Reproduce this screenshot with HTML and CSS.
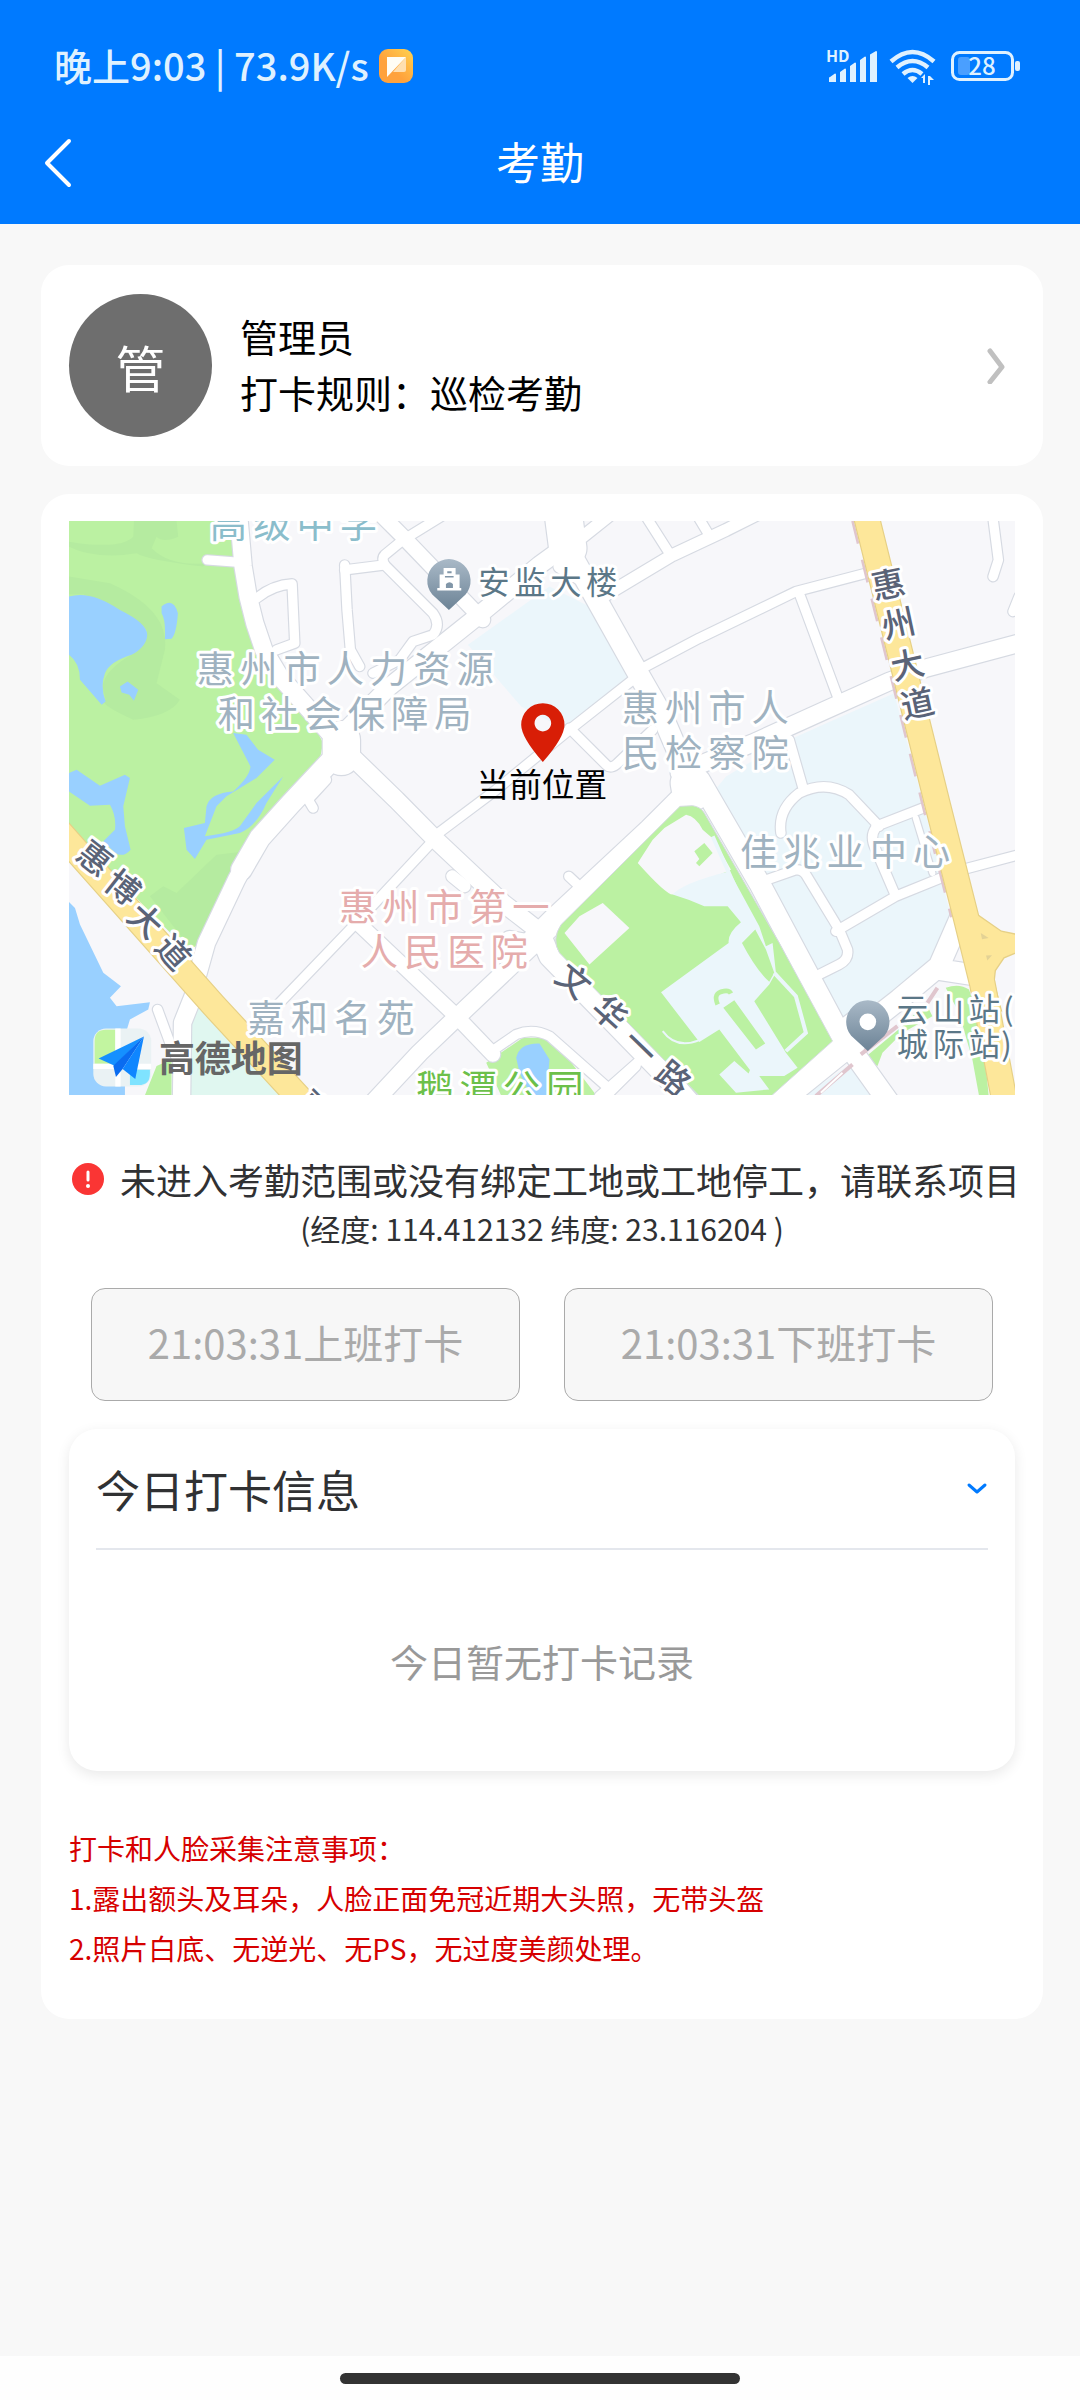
FILE: index.html
```html
<!DOCTYPE html>
<html lang="zh-CN">
<head>
<meta charset="utf-8">
<meta name="viewport" content="width=device-width, initial-scale=1">
<title>考勤</title>
<link rel="stylesheet" href="styles.css">
</head>
<body>
<header class="top">
  <div class="status">
    <span class="status-text">晚上9:03 | 73.9K/s</span>
    <svg class="app-icon" width="34" height="34" viewBox="0 0 34 34" aria-hidden="true">
      <defs><linearGradient id="appBg" x1="0" y1="1" x2="1" y2="0"><stop offset=".4" stop-color="#ffa23c"/><stop offset="1" stop-color="#ffd350"/></linearGradient></defs>
      <rect width="34" height="34" rx="9" fill="url(#appBg)"/>
      <path d="M27 8v13q0 2-2 2H14z" fill="#ffdfb0"/>
      <path d="M8 8h19L8 28z" fill="#fffdf5"/>
    </svg>
    <svg class="signals" width="200" height="48" viewBox="820 42 200 48" role="img" aria-label="信号 无线网络 电量">
      <g fill="#dff1ff">
        <text class="hd" x="826" y="62">HD</text>
        <path d="M829 82v-4q0-1 1-1l5-3.500q1 0 1 1V82zM840 82V72l5-3.500q1 0 1 1V82zM850 82V66l5-3.500q1 0 1 1V82zM860 82V60l5-3.500q1 0 1 1V82zM870 82V54.500l6-3.500q1 0 1 1V82z"/>
        <path d="M912.500 83l-5-5q5-4 10 0z"/>
        <rect x="1015" y="61" width="5" height="10" rx="2"/>
        <path d="M925 83v-9l-4 4h2v5zM928 76v9h2v-5h4l-4-4z"/>
      </g>
      <g fill="none" stroke="#dff1ff" stroke-width="4.500">
        <path d="M891 61.500q21.500-19 43 0M897 67.500q15.500-13 31 0M903 74q9.500-8 19 0"/>
        <rect x="952.500" y="52.500" width="60" height="27" rx="7" stroke-width="3"/>
      </g>
      <rect x="958" y="57" width="12" height="18" rx="3" fill="#4a9fff"/>
      <text class="level" x="982" y="75" text-anchor="middle">28</text>
    </svg>
  </div>
  <nav class="bar">
    <button class="back" type="button" aria-label="返回">
      <svg width="30" height="50" viewBox="0 0 30 50"><path d="M27 3L5 25l22 22" fill="none" stroke="#fff" stroke-width="4" stroke-linecap="round" stroke-linejoin="round"/></svg>
    </button>
    <h1 class="title">考勤</h1>
  </nav>
</header>

<main class="content">
  <a class="card profile" href="#rules">
    <span class="avatar">管</span>
    <span class="profile-text"><span>管理员</span><span>打卡规则：巡检考勤</span></span>
    <svg width="20" height="36" viewBox="0 0 20 36" aria-hidden="true"><path d="M4 3l12 16L4 34" fill="none" stroke="#c0c0c0" stroke-width="5" stroke-linecap="round" stroke-linejoin="round"/></svg>
  </a>

  <section class="card punch">
    <svg class="map" viewBox="0 0 2841 1725" role="img" aria-label="地图">
      <defs>
        <linearGradient id="poi" x1="0" y1="0" x2="0" y2="1"><stop offset="0" stop-color="#a9b9c7"/><stop offset="1" stop-color="#6c8396"/></linearGradient>
        <g id="streets">
          <g transform="translate(-27 -33)">
            <path class="road w50" d="M535 0L550 170L565 260L585 340L612 420L660 500L740 590L845 710L1010 870L1128 990L1330 1180L1420 1250"/>
            <path class="road w60" d="M845 720L690 885L600 985L545 1080"/>
            <path class="road w50" d="M590 1000L530 1110L440 1300L412 1400L400 1460L368 1540L365 1770"/>
            <path class="road w100" d="M845 690L845 740"/>
            <path class="road w30" d="M442 150L540 157M855 165L862 300L872 420L900 470M590 265Q640 225 697 222L705 400L650 420M975 165Q965 145 975 135L1030 90L1160 10M975 165L1120 310Q1145 345 1120 375L1060 395L1020 450L940 490"/>
            <path class="road w30" d="M855 180L975 165M800 810L745 870L760 895"/>
            <path class="road w40" d="M950 0L1030 80L1270 330"/>
            <path class="road w50" d="M850 670L990 530L1240 330L1440 165L1530 100"/>
          </g>
          <g transform="translate(1413 -33)">
            <path class="road w100" d="M70 0L85 115"/>
            <path class="road w60" d="M85 115L290 480L370 620L430 760L455 860"/>
            <path class="road w36" d="M130 80L230 0M200 255L400 135L560 60L680 0M60 170L200 255"/>
            <path class="road w30" d="M320 20L390 130M470 10L512 80M290 485L480 385L770 245L1000 185M780 250L895 560M1360 10L1378 150L1362 200M1440 260L1422 305M280 510L90 660L-130 840L-310 975M90 655L200 765Q215 780 235 760L340 660M750 690L790 830"/>
            <path class="road w50" d="M420 790L640 700L850 605L1050 515L1160 475L1440 400"/>
            <path class="road w100" d="M450 820L455 850"/>
          </g>
          <g transform="translate(-27 837)">
            <path class="road w30" d="M1128 115L890 370L650 620M293 630L330 730L360 800M1290 760L1370 705Q1420 685 1470 710L1640 860"/>
            <path class="road w40" d="M900 375L1190 650L1300 765"/>
            <path class="road w50" d="M1480 380L1190 655L1080 760L940 910"/>
            <path class="road w36" d="M1178 230L1215 260"/>
            <path class="road w50" d="M1350 420L1460 440"/>
          </g>
          <g transform="translate(1413 837)">
            <path class="road w60" d="M430 -10L330 90L40 360L-40 440"/>
            <path class="road w60" d="M480 -60L660 250L900 700L1050 910"/>
            <path class="road w60" d="M0 400L30 470L380 830L450 910"/>
            <path class="road w100" d="M670 920L880 750L970 680"/>
            <path class="road w60" d="M940 710L1080 600L1200 500L1270 340M1200 510L1330 530"/>
            <path class="road w30" d="M88 230L120 260M310 775L180 890M290 800L200 890M725 100Q715 30 780 -20Q860 -60 930 -15L1020 80M1010 80L1190 10M1010 85Q990 110 1010 150L1070 290M670 245L770 210Q790 210 800 225L900 390L925 450Q930 480 900 495L830 530M890 395L1070 290L1230 225M1440 165L1270 210"/>
            <path class="road w20" d="M1130 55L1180 220"/>
          </g>
        </g>
        <g id="avenues">
          <path d="M-40 920L435 1455L920 1980"/>
          <path d="M2393 -20L2608 850L2693 1187L2743 1390L2813 1760"/>
        </g>
      </defs>

      <rect width="2841" height="1725" fill="#f7f7fa"/>

      <g transform="translate(-27 -33)">
        <path fill="#bbf1a2" d="M0 0H530L545 200L590 400L720 560L790 700L780 750L600 985L530 1090L410 1310L380 1320L0 930z"/>
        <path fill="#b5eba0" d="M27 95Q180 120 220 80L222 33H350L355 80Q310 100 290 80L275 115Q330 170 440 160L430 170Q260 150 230 130Q110 150 27 110z"/>
        <path fill="#b5eba0" d="M27 200L150 220Q330 300 315 420L290 520L360 570Q330 620 220 630Q110 580 137 570L128 530Q135 480 215 435Q270 400 260 360Q220 310 70 253H27z"/>
        <path fill="#b5eba0" d="M270 1160L310 1130L350 1150L470 1035L560 1025L410 1310L380 1300z"/>
        <path fill="#99d0ff" d="M27 260Q90 240 180 300Q262 340 262 375Q260 410 215 435Q150 455 135 490Q120 530 137 575L125 585L60 510Q60 460 27 435zM305 290Q340 260 354 310Q350 370 335 387L315 388Q318 330 305 310zM180 530L203 515L235 540L222 573L208 555L185 548zM27 790L50 780L120 828L195 795L210 805L190 890L195 950L212 1020Q190 1045 165 1030L130 995L165 960Q170 920 150 885L90 888L27 845zM520 670L560 675L595 720L645 750L590 805L500 860L470 890L435 980Q520 970 540 950L590 880L670 800L620 880Q590 950 540 970L440 990L405 1048L380 1020L372 955L435 940L440 890Q450 850 520 845Q570 800 572 770z"/>
        <path fill="#ebf6fb" d="M1470 230L1590 290L1705 500L1520 660L1385 590L1225 405z"/>
      </g>
      <g transform="translate(-27 837)">
        <path fill="#99d0ff" d="M0 280L45 325L60 375L130 520L183 560L150 595L170 620L270 608L265 630L210 660L195 710V900H0z"/>
        <path fill="#bbf1a2" d="M250 900L290 800L335 780V900zM1280 790L1390 715H1440L1490 730L1620 900H1330z"/>
        <path fill="#e0f7f0" d="M390 620H435L700 900H390z"/>
        <path fill="#99d0ff" d="M1370 775Q1380 730 1440 732L1470 780L1460 900H1420L1380 820z"/>
      </g>
      <g transform="translate(1413 837)">
        <path fill="#ebf6fb" d="M520 -20L560 -70L750 -180L1065 -320L1150 0L1235 350L1180 500L1000 630L910 660zM780 900L940 790L1030 900z"/>
        <path fill="#bbf1a2" d="M970 780L1090 680L1160 610L1180 650L1090 700L1030 760L1015 800zM1220 565Q1260 550 1290 570L1330 690L1350 900H1322L1300 780L1260 640z"/>
      </g>

      <use href="#streets" class="casing"/>
      <use href="#streets" class="surface"/>

      <g transform="translate(1413 837)">
        <path fill="#bbf1a2" stroke="#d6dae2" stroke-width="3" d="M422 20L460 18Q485 22 495 40L720 430L880 725L690 895H485L60 460Q35 420 65 375z"/>
        <path fill="#f7f7fa" d="M375 85L440 45Q470 50 490 90L525 120L575 210L400 285Q380 285 295 190L340 120zM75 400L120 350L190 310L270 385L150 495z"/>
        <path fill="#bbf1a2" d="M465 155L495 130L520 160L480 200L470 190L480 178z"/>
        <path fill="#ebf6fb" d="M400 285Q430 250 570 215L660 380L680 440L700 430L710 520L690 555L645 605L740 760L775 805L735 830L660 830L690 870L590 880L540 825L585 785L628 822L632 812L540 690L480 728L365 578L568 430Q565 400 605 368L565 320L495 320Q450 300 400 285z"/>
        <path fill="#bbf1a2" d="M648 390L608 430Q650 510 690 547L705 520L680 450zM552 625L585 602L678 732L650 750z"/>
        <path fill="none" stroke="#bbf1a2" stroke-width="14" d="M535 615Q520 580 553 575Q570 572 575 582"/>
        <path fill="none" stroke="#ebf6fb" stroke-width="12" d="M705 520L770 590L800 700L740 755M640 380L520 110"/>
        <path fill="none" stroke="#ebf6fb" stroke-width="6" d="M370 695Q410 750 480 722"/>
        <path fill="none" stroke="#e0c6ce" stroke-width="12" d="M940 795L830 890M1075 680L965 765M1195 565L1165 610"/>
        <path fill="none" stroke="#fff" stroke-width="6" d="M910 820L845 880"/>
      </g>
      <path fill="none" stroke="#e0c6ce" stroke-width="8" stroke-dasharray="70 50" d="M2353 0L2563 850L2650 1190"/>
      <use href="#avenues" class="avenue-edge"/>
      <path class="interchange" d="M2690 1080L2728 1182L2800 1232L2860 1244V1290L2808 1312L2782 1350L2778 1385L2800 1470L2720 1400z"/>
      <use href="#avenues" class="avenue"/>
      <path fill="#e3d295" d="M2738 1237L2762 1252L2742 1256zM2754 1305L2772 1304L2758 1320z"/>

      <g class="label">
        <g transform="translate(-27 -33)">
          <text class="school" x="450 580 710 840" y="85">高级中学</text>
          <text x="411 541 671 801 931 1061 1191" y="521">惠州市人力资源</text>
          <text x="474 604 734 864 994 1124" y="656">和社会保障局</text>
          <text class="poi" x="1256 1364 1472 1580" y="253">安监大楼</text>
        </g>
        <g transform="translate(1413 -33)">
          <text x="247 377 507 637" y="637">惠州市人</text>
          <text x="247 377 507 637" y="773">民检察院</text>
        </g>
        <g transform="translate(-27 837)">
          <text class="hospital" x="838 968 1098 1228 1358" y="363">惠州市第一</text>
          <text class="hospital" x="903 1033 1163 1293" y="498">人民医院</text>
          <text x="563 693 823 953" y="699">嘉和名苑</text>
          <text class="park" x="1070 1200 1330 1460" y="909">鹅潭公园</text>
        </g>
        <g transform="translate(1413 837)">
          <text x="602 732 862 992 1122" y="200">佳兆业中心</text>
          <text class="poi" x="1073 1181 1289 1392" y="664">云山站(</text>
          <text class="poi" x="1073 1181 1289 1387" y="771">城际站)</text>
        </g>
        <g class="street">
          <text transform="translate(78 1012) rotate(38)" y="38">惠</text>
          <text transform="translate(163 1099) rotate(38)" y="38">博</text>
          <text transform="translate(231 1199) rotate(42)" y="38">大</text>
          <text transform="translate(315 1294) rotate(48)" y="38">道</text>
          <text transform="translate(736 1762) rotate(45)" y="38">惠</text>
          <text transform="translate(2460 189) rotate(-12)" y="38">惠</text>
          <text transform="translate(2491 307) rotate(-12)" y="38">州</text>
          <text transform="translate(2518 431) rotate(-12)" y="38">大</text>
          <text transform="translate(2548 547) rotate(-12)" y="38">道</text>
          <text transform="translate(1516 1380) rotate(40)" y="38">文</text>
          <text transform="translate(1625 1477) rotate(42)" y="38">华</text>
          <text transform="translate(1718 1577) rotate(44)" y="38">一</text>
          <text transform="translate(1816 1673) rotate(40)" y="38">路</text>
        </g>
      </g>

      <g transform="translate(1141 179)">
        <path fill="url(#poi)" d="M0 88L-50 42A65 65 0 1 1 50 42z"/>
        <path fill="#fff" d="M-16-38h36v20h12v40h5v8h-72v-8h7v-40h12z"/>
        <path fill="#8196a8" d="M-5-28h13v6h-13zM-12-14h26v5h-26zM-9 22V10Q2 0 12 10v12z"/>
      </g>
      <g transform="translate(2399 1504)">
        <path fill="url(#poi)" d="M0 88L-50 42A65 65 0 1 1 50 42z"/>
        <circle r="25" fill="#fff"/>
      </g>
      <path fill="#d81e06" fill-rule="evenodd" d="M1423 724Q1358 650 1358 612A65 65 0 0 1 1488 612Q1488 650 1423 724zM1423 582a25 25 0 1 0 .1 0z"/>
      <text class="here" x="1420" y="829" text-anchor="middle">当前位置</text>

      <g transform="translate(73 1524)">
        <rect width="174" height="174" rx="38" fill="#eaf2f4"/>
        <path fill="#c2f5a0" d="M38 4H66V106H4V38Q4 4 38 4z"/>
        <path fill="#7fe3ff" d="M110 124H170V136Q170 170 136 170H110z"/>
        <path fill="none" stroke="#fff" stroke-width="16" d="M74 0V174M0 114H174"/>
        <path fill="#1590ff" d="M152 24L16 90L64 112z"/>
        <path fill="#0a6cf0" d="M152 24L60 112L68 146L88 122z"/>
        <path fill="#0f86ff" d="M152 24L88 122L126 152z"/>
      </g>
      <text class="brand" x="270" y="1655">高德地图</text>
    </svg>

    <p class="alert">
      <svg width="32" height="32" viewBox="0 0 32 32" aria-hidden="true"><circle cx="16" cy="16" r="16" fill="#fa3534"/><path d="M16 9v8" stroke="#fff" stroke-width="3" stroke-linecap="round"/><circle cx="16" cy="23" r="2" fill="#fff"/></svg>
      <span>未进入考勤范围或没有绑定工地或工地停工，请联系项目</span>
    </p>
    <p class="coords">(经度: 114.412132 纬度: 23.116204 )</p>

    <div class="actions">
      <button class="action" type="button" disabled>21:03:31上班打卡</button>
      <button class="action" type="button" disabled>21:03:31下班打卡</button>
    </div>

    <section class="records">
      <div class="records-head">
        <h2 class="records-title">今日打卡信息</h2>
        <button class="toggle" type="button" aria-label="展开">
          <svg width="22" height="14" viewBox="0 0 22 14"><path d="M3 3l8 7 8-7" fill="none" stroke="#007aff" stroke-width="3" stroke-linecap="round" stroke-linejoin="round"/></svg>
        </button>
      </div>
      <p class="empty">今日暂无打卡记录</p>
    </section>

    <div class="notes" id="rules">
      <p>打卡和人脸采集注意事项：</p>
      <p>1.露出额头及耳朵，人脸正面免冠近期大头照，无带头盔</p>
      <p>2.照片白底、无逆光、无PS，无过度美颜处理。</p>
    </div>
  </section>
</main>

<footer class="home"><span class="home-bar"></span></footer>
</body>
</html>
```
FILE: styles.css
```css
* { box-sizing: border-box; }

body {
  margin: 0;
  min-height: 100vh;
  display: flex;
  flex-direction: column;
  background: #f8f8f8;
  color: #303133;
  font-family: "Noto Sans CJK SC", "Noto Sans", sans-serif;
}

h1, h2, p { margin: 0; font-weight: 400; }

button {
  border: 0;
  padding: 0;
  background: none;
  font-family: inherit;
}

svg { display: block; flex-shrink: 0; }

/* Header */
.top { background: #007aff; color: #fff; }

.status {
  display: flex;
  align-items: center;
  gap: 10px;
  height: 102px;
  padding: 30px 60px 0 54px;
}

.status-text {
  padding-bottom: 2px;
  font-size: 38px;
  line-height: 40px;
  font-weight: 500;
  color: #dff1ff;
  white-space: nowrap;
}

.signals { margin-left: auto; }
.hd { font-size: 16px; font-weight: 700; }
.level { font-size: 24px; font-weight: 500; fill: #dff1ff; }

.bar {
  display: grid;
  grid-template-columns: 80px 1fr 80px;
  align-items: center;
  height: 122px;
}

.back { padding-left: 42px; }
.title {
  padding-bottom: 4px;
  font-size: 44px;
  line-height: 60px;
  text-align: center;
}

/* Cards */
.content {
  flex: 1;
  display: flex;
  flex-direction: column;
  gap: 28px;
  padding: 41px 37px 41px 41px;
}

.card { background: #fff; border-radius: 28px; }

.profile {
  display: flex;
  align-items: center;
  gap: 28px;
  padding: 29px 37px 29px 28px;
  color: #000;
  text-decoration: none;
}

.avatar {
  display: grid;
  place-items: center;
  width: 143px;
  height: 143px;
  border-radius: 50%;
  background: #6e6e6e;
  color: #fff;
  font-size: 50px;
}

.profile-text {
  flex: 1;
  display: flex;
  flex-direction: column;
  padding-bottom: 4px;
  font-size: 38px;
  line-height: 56px;
}

.punch { padding: 27px 28px 46px; }

/* Map */
.map { width: 100%; height: auto; }

.road {
  fill: none;
  stroke-linecap: round;
  stroke-linejoin: round;
  stroke-width: calc(var(--w) + var(--edge));
}
.w20 { --w: 18px; }
.w30 { --w: 28px; }
.w36 { --w: 36px; }
.w40 { --w: 44px; }
.w50 { --w: 52px; }
.w60 { --w: 62px; }
.w100 { --w: 112px; }
.casing { --edge: 7px; stroke: #d6dae2; }
.surface { --edge: 0px; stroke: #fff; }
.avenue, .avenue-edge { fill: none; stroke-linejoin: round; }
.avenue-edge { stroke: #e6d086; stroke-width: 80px; }
.avenue { stroke: #fde79a; stroke-width: 73px; }
.interchange { fill: #fde79a; stroke: #e6d086; stroke-width: 4px; }

.label {
  font-size: 112px;
  fill: #9fb2c0;
  stroke: #fff;
  stroke-width: 18px;
  stroke-linejoin: round;
  paint-order: stroke;
}
.school { fill: #8abdcb; }
.hospital { fill: #e5acac; }
.park { fill: #6cc04a; }
.poi { font-size: 94px; fill: #5b7787; }
.street { font-size: 100px; font-weight: 500; fill: #5a6377; text-anchor: middle; }
.here { font-size: 98px; fill: #000; }
.brand { font-size: 108px; font-weight: 700; fill: #666; }

/* Punch state */
.alert {
  display: flex;
  align-items: center;
  gap: 16px;
  margin-top: 59px;
  padding-left: 3px;
  font-size: 36px;
  line-height: 50px;
  white-space: nowrap;
}

.coords {
  font-size: 30px;
  line-height: 48px;
  text-align: center;
}

.actions {
  display: grid;
  grid-template-columns: 1fr 1fr;
  gap: 44px;
  margin-top: 36px;
  padding: 0 22px;
}

.action {
  height: 113px;
  padding-bottom: 6px;
  border: 1px solid #aaa;
  border-radius: 14px;
  background: #f7f7f7;
  color: #aaa;
  font-size: 40px;
}

/* Today's records */
.records {
  margin-top: 28px;
  padding: 0 27px;
  border-radius: 28px;
  background: #fff;
  box-shadow: 0 4px 14px rgba(0, 0, 0, 0.09);
}

.records-head {
  display: flex;
  align-items: center;
  justify-content: space-between;
  height: 121px;
  border-bottom: 2px solid #e4e7ed;
}

.records-title { font-size: 44px; line-height: 60px; }

.empty {
  padding: 82px 0;
  font-size: 38px;
  line-height: 57px;
  text-align: center;
  color: #999;
}

.notes {
  margin-top: 52px;
  font-size: 28px;
  line-height: 50px;
  color: #d60000;
}

/* Gesture bar */
.home {
  display: flex;
  justify-content: center;
  padding: 17px 0 16px;
  background: #fefefe;
}

.home-bar {
  width: 37%;
  height: 11px;
  border-radius: 6px;
  background: #333;
}
```
